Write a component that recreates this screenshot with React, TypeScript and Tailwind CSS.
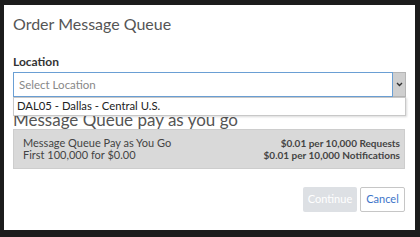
import React from 'react';

export default function App() {
  return (
    <div
      className="w-[420px] h-[237px] bg-[#1c1c1c] pt-[5px] pl-[4px]"
      style={{ fontFamily: '"Lato", "Liberation Sans", sans-serif' }}
    >
      <div className="w-[411px] h-[225px] bg-white px-[9px] pt-[9px]">
        <h1 className="text-[16px] leading-[20px] text-[#555]">Order Message Queue</h1>

        <label className="block mt-[21px] text-[12px] leading-[14px] font-bold text-[#333]">Location</label>

        <div className="relative mt-[3px] w-[393px]">
          <div className="flex h-[25px]">
            <div className="flex-1 flex items-center border border-[#6a9fd4] px-[5px] text-[11.5px] text-[#888]">
              Select Location
            </div>
            <div className="w-[13px] flex items-center justify-center bg-[#cfcfcf] border border-[#b5b5b5] border-l-0">
              <svg width="7" height="5" viewBox="0 0 7 5">
                <path d="M1 1 L3.5 3.5 L6 1" stroke="#333" strokeWidth="1.4" fill="none" />
              </svg>
            </div>
          </div>
          <div className="absolute left-0 top-[25px] w-[393px] h-[19px] bg-white border border-[#c8c8c8] shadow-[1px_1px_2px_rgba(0,0,0,0.15)] flex items-center px-[3px] text-[11.3px] text-[#222] z-10">
            DAL05 - Dallas - Central U.S.
          </div>
        </div>

        <h2 className="mt-[14px] text-[17px] leading-[18px] text-[#555]">Message Queue pay as you go</h2>

        <div className="w-[392px] h-[40px] bg-[#d9d9d9] border border-[#cdcdcd] flex items-center justify-between pl-[9px] pr-[4px]">
          <div className="text-[11px] leading-[12px] text-[#444]">
            <div>Message Queue Pay as You Go</div>
            <div>First 100,000 for $0.00</div>
          </div>
          <div className="text-[10px] leading-[12px] font-bold text-[#444] text-right">
            <div>$0.01 per 10,000 Requests</div>
            <div>$0.01 per 10,000 Notifications</div>
          </div>
        </div>

        <div className="flex justify-end gap-[3px] mt-[18px] pr-[1px]">
          <button className="w-[54px] h-[25px] rounded-[2px] bg-[#dde0e4] text-[11px] text-white">Continue</button>
          <button className="w-[45px] h-[25px] rounded-[2px] bg-white border border-[#c6c6c6] text-[11px] text-[#3d74c9]">Cancel</button>
        </div>
      </div>
    </div>
  );
}
